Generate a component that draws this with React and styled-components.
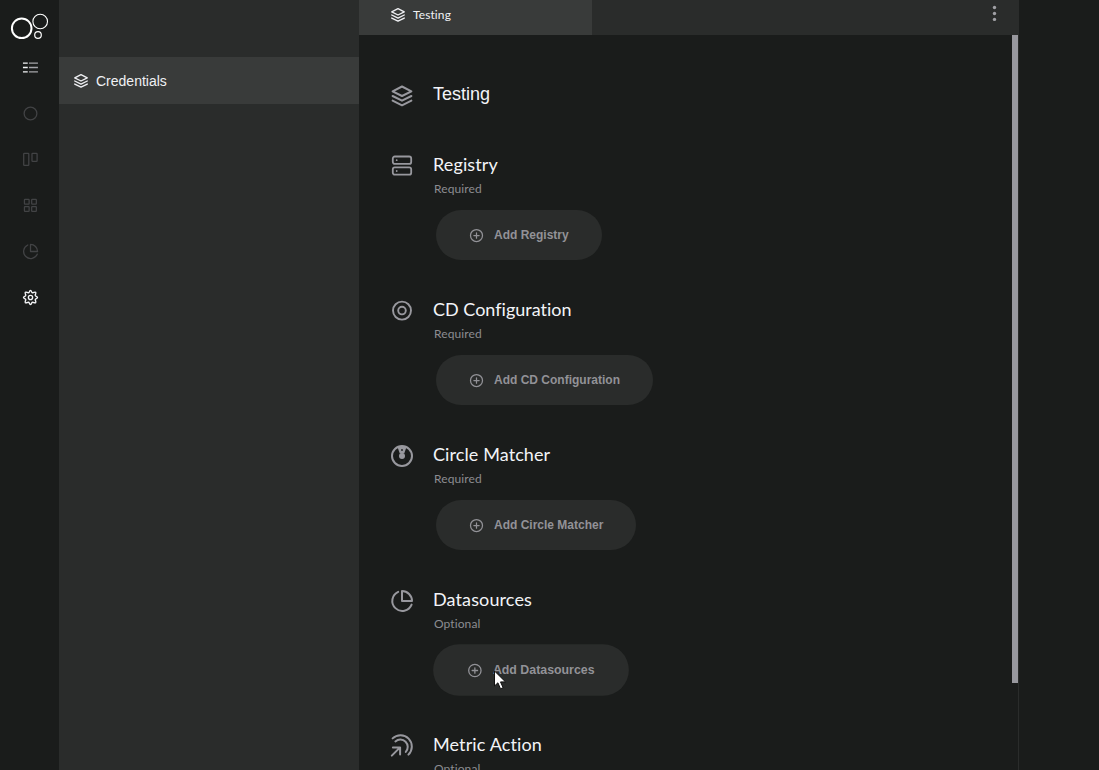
import React from 'react';
import styled, { createGlobalStyle } from 'styled-components';

const GlobalStyle = createGlobalStyle`
  * { box-sizing: border-box; }
  body { margin: 0; background: #1a1c1b; overflow: hidden; }
  svg { display: block; flex: none; overflow: visible; }
`;

const Page = styled.div`
  display: flex;
  width: 100vw;
  height: 100vh;
  overflow: hidden;
  position: relative;
  background: #1a1c1b;
  font-family: 'Liberation Sans', Arial, sans-serif;
`;

const Nav = styled.nav`
  width: 59px;
  flex: none;
  display: flex;
  flex-direction: column;
  padding: 12px 0 0 10px;
`;

const NavList = styled.div`
  display: flex;
  flex-direction: column;
  gap: 30px;
  padding: 18px 0 0 12px;
`;

const NavIcon = styled.a`
  width: 17px;
  height: 16px;
  color: ${(p) => (p.$active ? '#f4f5f7' : '#424345')};
`;

const Sidebar = styled.aside`
  width: 300px;
  flex: none;
  padding-top: 57px;
  background: #2a2c2b;
`;

const MenuItem = styled.div`
  display: flex;
  align-items: center;
  height: 47px;
  padding-left: 13.5px;
  gap: 7.5px;
  background: #393b3a;
  color: #f0f1f4;
  font-size: 14px;
  line-height: 18px;
`;

const Main = styled.main`
  width: 660px;
  flex: none;
  display: flex;
  flex-direction: column;
  border-right: 1px solid #2a2c2b;
`;

const TabBar = styled.header`
  display: flex;
  justify-content: space-between;
  height: 35px;
  flex: none;
  margin-right: -1px;
  background: #2a2c2b;
`;

const Tab = styled.div`
  display: flex;
  align-items: center;
  width: 233px;
  padding: 0 0 6px 30.5px;
  gap: 7.5px;
  background: #393b3a;
  color: #f0f1f4;
  font: 12px/16px Lato, sans-serif;
  letter-spacing: 0.1px;
`;

const MoreButton = styled.div`
  padding: 5px 16px 0 0;
  color: #a0a0a5;
`;

const Scroller = styled.div`
  display: flex;
  flex: 1;
  min-height: 0;
  overflow: hidden;
`;

const Content = styled.div`
  flex: 1;
  padding: 47px 0 0 31px;
`;

const ScrollThumb = styled.div`
  width: 6px;
  height: 648px;
  background: #98989e;
`;

const Section = styled.section`
  display: grid;
  grid-template-columns: 24px 1fr;
  column-gap: 19px;
  align-content: start;
  height: ${(p) => p.$height}px;
  color: #98989e;
`;

const SectionIcon = styled.div`
  padding-top: 2px;
`;

const Title = styled.h2`
  margin: 0;
  color: #f3f4f8;
  font: 400 18px/24px ${(p) => (p.$plain ? "'Liberation Sans', Arial" : 'Lato')}, sans-serif;
  font-variant-ligatures: none;
  letter-spacing: ${(p) => p.$tracking || 0}px;
`;

const Hint = styled.div`
  padding: 5px 0 0 1px;
  color: #8c8c91;
  font: 12px/15px Lato, sans-serif;
  font-variant-ligatures: none;
  letter-spacing: 0.1px;
`;

const AddButton = styled.button`
  display: flex;
  align-items: center;
  width: max-content;
  height: 50px;
  margin: 14px 0 0 3px;
  padding: 0 33px;
  gap: 10px;
  border: 0;
  border-radius: 25px;
  background: #2a2c2b;
  color: #929297;
  font: bold 12px/16px 'Liberation Sans', Arial, sans-serif;
  transform: ${(p) => (p.$hovered ? 'scale(1.03)' : 'none')};
`;

const Cursor = styled.div`
  position: absolute;
  left: 494px;
  top: 670px;
`;

const Icon = ({ size = 24, width = 2, children }) => (
  <svg
    width={size}
    height={size}
    viewBox="0 0 24 24"
    fill="none"
    stroke="currentColor"
    strokeWidth={width}
    strokeLinecap="round"
    strokeLinejoin="round"
  >
    {children}
  </svg>
);

const Layers = ({ size, width }) => (
  <Icon size={size} width={width}>
    <path d="M12 2.5 2.6 7.3 12 12l9.4-4.7zM2.6 12l9.4 4.7 9.4-4.7M2.6 16.6l9.4 4.7 9.4-4.7" />
  </Icon>
);

const Server = () => (
  <Icon width={1.8}>
    <rect x="2.8" y="2.5" width="18.4" height="7.4" rx="2" />
    <rect x="2.8" y="13.3" width="18.4" height="7.4" rx="2" />
    <path d="M6.7 6.2h.01M6.7 17h.01" />
  </Icon>
);

const Disc = () => (
  <Icon width={1.9}>
    <circle cx="12" cy="11.6" r="9" />
    <circle cx="12" cy="11.6" r="3.8" />
  </Icon>
);

const Matcher = () => (
  <Icon>
    <circle cx="12" cy="12" r="10" />
    <path d="M7.4 2.8h9.2l-2.4 6.6H9.8z" fill="currentColor" stroke="none" />
    <circle cx="12" cy="11.9" r="3" fill="currentColor" stroke="none" />
    <circle cx="12" cy="6" r=".9" fill="#1a1c1b" stroke="none" />
  </Icon>
);

const Pie = ({ size, width = 2 }) => (
  <Icon size={size} width={width}>
    <path d="M8.2 2.8A10 10 0 1 0 21.6 15.6" />
    <path d="M12 2v10h10A10 10 0 0 0 12 2z" />
  </Icon>
);

const Metric = () => (
  <Icon width={2}>
    <path d="M2.6 4.4A11.1 11.1 0 0 1 18.4 20.6" />
    <path d="M5.4 7.4A7.4 7.4 0 0 1 15.8 17.9" />
    <path d="M1.8 21.6l8-8M2.9 13.4h7.2v7.2" />
  </Icon>
);

const PlusCircle = () => (
  <Icon size={15} width={2}>
    <circle cx="12" cy="12" r="9.6" />
    <path d="M12 7.8v8.4M7.8 12h8.4" />
  </Icon>
);

const Logo = () => (
  <svg width="39" height="29" viewBox="0 0 39 29" fill="none" stroke="#fff">
    <circle cx="11.7" cy="16.3" r="9.8" strokeWidth="2" />
    <circle cx="30.2" cy="9.5" r="7.3" strokeWidth="1.1" />
    <circle cx="28" cy="23" r="3.3" strokeWidth="1.2" />
  </svg>
);

const Small = ({ children, width = 1.2 }) => (
  <svg width="17" height="17" viewBox="0 0 16 16" fill="none" stroke="currentColor" strokeWidth={width} strokeLinejoin="round">
    {children}
  </svg>
);

const ListIcon = () => (
  <Small width={1.2}>
    <path d="M.9 3.8h4.5M.9 8h4.5M.9 12.1h4.5" />
    <path d="M6.6 3.8H15M6.6 8H15M6.6 12.1H15" stroke="#a5a5aa" />
  </Small>
);

const Ring = () => (
  <Small>
    <circle cx="8" cy="8" r="6" />
  </Small>
);

const Board = () => (
  <Small>
    <rect x="1.6" y="2.2" width="4.8" height="11.4" rx=".6" />
    <rect x="9.4" y="2.2" width="4.8" height="7.6" rx=".6" />
  </Small>
);

const Grid = () => (
  <Small>
    <rect x="2.3" y="2.3" width="4.4" height="4.4" rx=".5" />
    <rect x="9.1" y="2.3" width="4.4" height="4.4" rx=".5" />
    <rect x="2.3" y="9.1" width="4.4" height="4.4" rx=".5" />
    <rect x="9.1" y="9.1" width="4.4" height="4.4" rx=".5" />
  </Small>
);

const Gear = () => (
  <Small width={1.3}>
    <path d="M6.8 2.9Q8-.1 9.2 2.9Q9.8 4 10.9 3.3Q13.9 2.1 12.7 5.1Q12 6.2 13.1 6.8Q16.1 8 13.1 9.2Q12 9.8 12.7 10.9Q13.9 13.9 10.9 12.7Q9.8 12 9.2 13.1Q8 16.1 6.8 13.1Q6.2 12 5.1 12.7Q2.1 13.9 3.3 10.9Q4 9.8 2.9 9.2Q-.1 8 2.9 6.8Q4 6.2 3.3 5.1Q2.1 2.1 5.1 3.3Q6.2 4 6.8 2.9z" />
    <circle cx="8" cy="8" r="2" />
  </Small>
);

const navItems = [
  { Glyph: ListIcon, active: true },
  { Glyph: Ring },
  { Glyph: Board },
  { Glyph: Grid },
  { Glyph: () => <Pie size={17} width={1.8} /> },
  { Glyph: Gear, active: true },
];

const sections = [
  { title: 'Registry', hint: 'Required', action: 'Add Registry', Glyph: Server, tracking: 0.12 },
  { title: 'CD Configuration', hint: 'Required', action: 'Add CD Configuration', Glyph: Disc },
  { title: 'Circle Matcher', hint: 'Required', action: 'Add Circle Matcher', Glyph: Matcher, tracking: 0.1 },
  { title: 'Datasources', hint: 'Optional', action: 'Add Datasources', Glyph: Pie, hovered: true, tracking: 0.12 },
  { title: 'Metric Action', hint: 'Optional', action: 'Add Metric Action', Glyph: Metric, tracking: 0.12 },
];

export default function App() {
  return (
    <Page>
      <GlobalStyle />
      <Nav>
        <Logo />
        <NavList>
          {navItems.map(({ Glyph, active }, i) => (
            <NavIcon key={i} $active={active}>
              <Glyph />
            </NavIcon>
          ))}
        </NavList>
      </Nav>
      <Sidebar>
        <MenuItem>
          <Layers size={16} width={2} />
          Credentials
        </MenuItem>
      </Sidebar>
      <Main>
        <TabBar>
          <Tab>
            <Layers size={16} width={2} />
            Testing
          </Tab>
          <MoreButton>
            <svg width="17" height="17" viewBox="0 0 17 17" fill="currentColor">
              <circle cx="8.5" cy="2.5" r="1.7" />
              <circle cx="8.5" cy="8.5" r="1.7" />
              <circle cx="8.5" cy="14.4" r="1.7" />
            </svg>
          </MoreButton>
        </TabBar>
        <Scroller>
          <Content>
            <Section $height={70}>
              <SectionIcon>
                <Layers width={2} />
              </SectionIcon>
              <Title $plain>Testing</Title>
            </Section>
            {sections.map(({ title, hint, action, Glyph, hovered, tracking }) => (
              <Section key={title} $height={145}>
                <SectionIcon>
                  <Glyph />
                </SectionIcon>
                <div>
                  <Title $tracking={tracking}>{title}</Title>
                  <Hint>{hint}</Hint>
                  <AddButton $hovered={hovered}>
                    <PlusCircle />
                    {action}
                  </AddButton>
                </div>
              </Section>
            ))}
          </Content>
          <ScrollThumb />
        </Scroller>
      </Main>
      <Cursor>
        <svg width="13" height="20" viewBox="0 0 13 20">
          <path d="M.5 1v15l3.4-3.2 2.6 6 2.6-1.1-2.6-5.8h5z" fill="#fff" stroke="#111" strokeWidth="1" />
        </svg>
      </Cursor>
    </Page>
  );
}
